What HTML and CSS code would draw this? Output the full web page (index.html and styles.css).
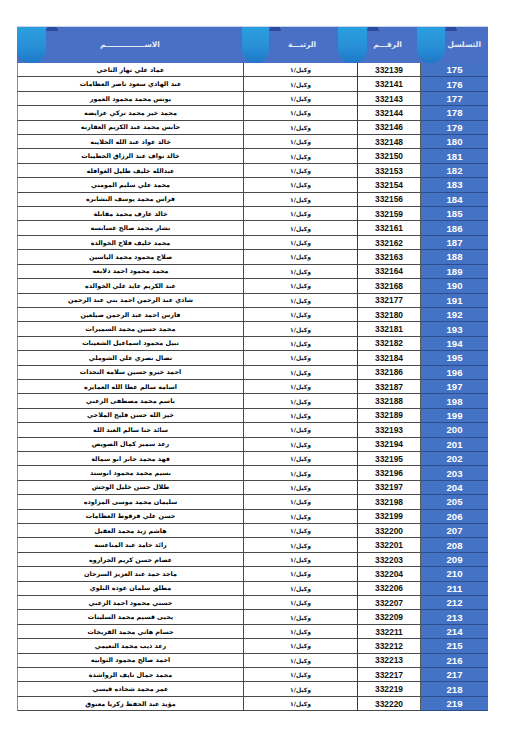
FILE: index.html
```html
<!DOCTYPE html>
<html lang="ar" dir="rtl">
<head>
<meta charset="utf-8">
<title>كشف</title>
<link rel="stylesheet" href="styles.css">
</head>
<body>
<div class="sheet">
  <div class="table">
    <div class="head">
      <div class="hcell c-serial">التسلسل</div>
      <div class="hcell c-num">الرقـــم</div>
      <div class="hcell c-rank">الرتبـــة</div>
      <div class="hcell c-name">الاســـــــــــــــم</div>
      <span class="tab t1"></span><span class="bump b1"></span>
      <span class="tab t2"></span><span class="bump b2"></span>
      <span class="tab t3"></span><span class="bump b3"></span>
      <span class="tab t4"></span><span class="bump b4"></span>
    </div>
    <div class="row"><div class="c-serial">175</div><div class="c-num">332139</div><div class="c-rank">وكيل/١</div><div class="c-name">عماد علي نهار الناجي</div></div>
    <div class="row"><div class="c-serial">176</div><div class="c-num">332141</div><div class="c-rank">وكيل/١</div><div class="c-name">عبد الهادي سعود ناصر العظامات</div></div>
    <div class="row"><div class="c-serial">177</div><div class="c-num">332143</div><div class="c-rank">وكيل/١</div><div class="c-name">يونس محمد محمود العمور</div></div>
    <div class="row"><div class="c-serial">178</div><div class="c-num">332144</div><div class="c-rank">وكيل/١</div><div class="c-name">محمد خير محمد تركي عرايضه</div></div>
    <div class="row"><div class="c-serial">179</div><div class="c-num">332146</div><div class="c-rank">وكيل/١</div><div class="c-name">حابس محمد عبد الكريم العقاربه</div></div>
    <div class="row"><div class="c-serial">180</div><div class="c-num">332148</div><div class="c-rank">وكيل/١</div><div class="c-name">خالد عواد عبد الله الحلايبه</div></div>
    <div class="row"><div class="c-serial">181</div><div class="c-num">332150</div><div class="c-rank">وكيل/١</div><div class="c-name">خالد نواف عبد الرزاق الحطيبات</div></div>
    <div class="row"><div class="c-serial">182</div><div class="c-num">332153</div><div class="c-rank">وكيل/١</div><div class="c-name">عبدالله خليف طليل الغوافله</div></div>
    <div class="row"><div class="c-serial">183</div><div class="c-num">332154</div><div class="c-rank">وكيل/١</div><div class="c-name">محمد علي سليم المومني</div></div>
    <div class="row"><div class="c-serial">184</div><div class="c-num">332156</div><div class="c-rank">وكيل/١</div><div class="c-name">فراس محمد يوسف البشابره</div></div>
    <div class="row"><div class="c-serial">185</div><div class="c-num">332159</div><div class="c-rank">وكيل/١</div><div class="c-name">خالد عارف محمد مقابلة</div></div>
    <div class="row"><div class="c-serial">186</div><div class="c-num">332161</div><div class="c-rank">وكيل/١</div><div class="c-name">بشار محمد صالح غسابسه</div></div>
    <div class="row"><div class="c-serial">187</div><div class="c-num">332162</div><div class="c-rank">وكيل/١</div><div class="c-name">محمد خليف فلاح الخوالدة</div></div>
    <div class="row"><div class="c-serial">188</div><div class="c-num">332163</div><div class="c-rank">وكيل/١</div><div class="c-name">صلاح محمود محمد الياسين</div></div>
    <div class="row"><div class="c-serial">189</div><div class="c-num">332164</div><div class="c-rank">وكيل/١</div><div class="c-name">محمد محمود احمد دلابعه</div></div>
    <div class="row"><div class="c-serial">190</div><div class="c-num">332168</div><div class="c-rank">وكيل/١</div><div class="c-name">عبد الكريم عايد علي الخوالده</div></div>
    <div class="row"><div class="c-serial">191</div><div class="c-num">332177</div><div class="c-rank">وكيل/١</div><div class="c-name">شادي عبد الرحمن احمد بني عبد الرحمن</div></div>
    <div class="row"><div class="c-serial">192</div><div class="c-num">332180</div><div class="c-rank">وكيل/١</div><div class="c-name">فارس احمد عبد الرحمن صيلعين</div></div>
    <div class="row"><div class="c-serial">193</div><div class="c-num">332181</div><div class="c-rank">وكيل/١</div><div class="c-name">محمد حسين محمد السميرات</div></div>
    <div class="row"><div class="c-serial">194</div><div class="c-num">332182</div><div class="c-rank">وكيل/١</div><div class="c-name">نبيل محمود اسماعيل الشعيبات</div></div>
    <div class="row"><div class="c-serial">195</div><div class="c-num">332184</div><div class="c-rank">وكيل/١</div><div class="c-name">نضال نصري علي الشوملي</div></div>
    <div class="row"><div class="c-serial">196</div><div class="c-num">332186</div><div class="c-rank">وكيل/١</div><div class="c-name">احمد خيرو حسين سلامه النجدات</div></div>
    <div class="row"><div class="c-serial">197</div><div class="c-num">332187</div><div class="c-rank">وكيل/١</div><div class="c-name">اسامه سالم عطا الله العمايره</div></div>
    <div class="row"><div class="c-serial">198</div><div class="c-num">332188</div><div class="c-rank">وكيل/١</div><div class="c-name">باسم محمد مصطفى الزعبي</div></div>
    <div class="row"><div class="c-serial">199</div><div class="c-num">332189</div><div class="c-rank">وكيل/١</div><div class="c-name">خير الله حسن فليح الملاحي</div></div>
    <div class="row"><div class="c-serial">200</div><div class="c-num">332193</div><div class="c-rank">وكيل/١</div><div class="c-name">سائد حنا سالم العبد الله</div></div>
    <div class="row"><div class="c-serial">201</div><div class="c-num">332194</div><div class="c-rank">وكيل/١</div><div class="c-name">رعد سمير كمال الصويص</div></div>
    <div class="row"><div class="c-serial">202</div><div class="c-num">332195</div><div class="c-rank">وكيل/١</div><div class="c-name">فهد محمد جابر ابو سمالة</div></div>
    <div class="row"><div class="c-serial">203</div><div class="c-num">332196</div><div class="c-rank">وكيل/١</div><div class="c-name">بسيم محمد محمود ابوسند</div></div>
    <div class="row"><div class="c-serial">204</div><div class="c-num">332197</div><div class="c-rank">وكيل/١</div><div class="c-name">طلال حسن خليل الوحش</div></div>
    <div class="row"><div class="c-serial">205</div><div class="c-num">332198</div><div class="c-rank">وكيل/١</div><div class="c-name">سليمان محمد موسى المزاوده</div></div>
    <div class="row"><div class="c-serial">206</div><div class="c-num">332199</div><div class="c-rank">وكيل/١</div><div class="c-name">حسن علي قرقوط العظامات</div></div>
    <div class="row"><div class="c-serial">207</div><div class="c-num">332200</div><div class="c-rank">وكيل/١</div><div class="c-name">هاشم زيد محمد العقيل</div></div>
    <div class="row"><div class="c-serial">208</div><div class="c-num">332201</div><div class="c-rank">وكيل/١</div><div class="c-name">رائد حامد عبد المناعسه</div></div>
    <div class="row"><div class="c-serial">209</div><div class="c-num">332203</div><div class="c-rank">وكيل/١</div><div class="c-name">عصام حسن كريم الجراروه</div></div>
    <div class="row"><div class="c-serial">210</div><div class="c-num">332204</div><div class="c-rank">وكيل/١</div><div class="c-name">ماجد حمد عبد العزيز السرحان</div></div>
    <div class="row"><div class="c-serial">211</div><div class="c-num">332206</div><div class="c-rank">وكيل/١</div><div class="c-name">مطلق سلمان عوده البلوي</div></div>
    <div class="row"><div class="c-serial">212</div><div class="c-num">332207</div><div class="c-rank">وكيل/١</div><div class="c-name">حسني محمود احمد الزعبي</div></div>
    <div class="row"><div class="c-serial">213</div><div class="c-num">332209</div><div class="c-rank">وكيل/١</div><div class="c-name">يحيى قسيم محمد السليتات</div></div>
    <div class="row"><div class="c-serial">214</div><div class="c-num">332211</div><div class="c-rank">وكيل/١</div><div class="c-name">حسام هاني محمد القريحات</div></div>
    <div class="row"><div class="c-serial">215</div><div class="c-num">332212</div><div class="c-rank">وكيل/١</div><div class="c-name">رعد ذيب محمد النعيمي</div></div>
    <div class="row"><div class="c-serial">216</div><div class="c-num">332213</div><div class="c-rank">وكيل/١</div><div class="c-name">احمد صالح محمود الثوابيه</div></div>
    <div class="row"><div class="c-serial">217</div><div class="c-num">332217</div><div class="c-rank">وكيل/١</div><div class="c-name">محمد جمال نايف الرواشدة</div></div>
    <div class="row"><div class="c-serial">218</div><div class="c-num">332219</div><div class="c-rank">وكيل/١</div><div class="c-name">عمر محمد شحاده قيسي</div></div>
    <div class="row"><div class="c-serial">219</div><div class="c-num">332220</div><div class="c-rank">وكيل/١</div><div class="c-name">مؤيد عبد الحفظ زكريا معتوق</div></div>
  </div>
</div>
</body>
</html>
```
FILE: styles.css
```css
html, body {
  margin: 0;
  padding: 0;
  background: #ffffff;
}
.sheet {
  padding: 26px 29px 0 17px;
  direction: ltr;
}
.table {
  direction: rtl;
  width: 471px;
  font-family: "DejaVu Sans", "Liberation Sans", sans-serif;
}
.head {
  position: relative;
  display: grid;
  grid-template-columns: 68px 63px 114px 226px;
  height: 37px;
  background: #4a70c5;
  border-top: 1px solid #c9d3e6;
  box-sizing: border-box;
  overflow: hidden;
}
.hcell {
  display: flex;
  align-items: center;
  justify-content: center;
  color: #e8edf8;
  font-size: 7.5px;
  font-weight: bold;
  padding-bottom: 2px;
  white-space: nowrap;
}
.head .c-serial { justify-content: flex-start; padding-right: 7px; }
.head .c-num { padding-right: 2px; }
.head .c-rank { padding-left: 4px; }
.head .c-name { padding-left: 0; }
.tab {
  position: absolute;
  top: -1px;
  width: 29px;
  height: 37px;
  border-radius: 3px 3px 13px 13px;
  background: linear-gradient(180deg, #2aa0e0 0%, #2890d8 55%, #1e78c6 100%);
  z-index: 2;
}
.bump {
  position: absolute;
  top: -1px;
  width: 12px;
  height: 5px;
  border-radius: 6px 6px 0 0;
  background: #2b4a9e;
  z-index: 1;
}
/* tab positions on the header strip (free decoration) */
.t1 { left: 0; }
.b1 { left: 29px; }
.t2 { left: 225px; width: 27px; }
.b2 { left: 252px; }
.t3 { left: 321px; }
.b3 { left: 350px; }
.t4 { left: 400px; width: 28px; }
.b4 { left: 428px; }

.row {
  display: grid;
  grid-template-columns: 68px 63px 114px 226px;
  height: 14.42px;
  box-sizing: border-box;
}
.row > div {
  display: flex;
  align-items: center;
  justify-content: center;
  border-bottom: 1px solid #4a4a4a;
  box-sizing: border-box;
  white-space: nowrap;
  overflow: hidden;
}
.row .c-serial {
  background: #4472c4;
  color: #ffffff;
  font-family: "Liberation Sans", Arial, sans-serif;
  font-weight: bold;
  font-size: 9.6px;
  border-bottom-color: #2d4d8c;
  border-left: 1px solid #5a5a5a;
}
.row .c-num {
  font-family: "Liberation Sans", Arial, sans-serif;
  font-weight: bold;
  font-size: 8.4px;
  color: #111;
  border-left: 1.5px solid #3a3a3a;
}
.row .c-rank {
  font-size: 6px;
  font-weight: bold;
  color: #111;
  border-left: 1px solid #4a4a4a;
}
.row .c-name {
  font-size: 6.4px;
  font-weight: bold;
  color: #000;
  border-left: 1px solid #8a8a8a;
}
```
